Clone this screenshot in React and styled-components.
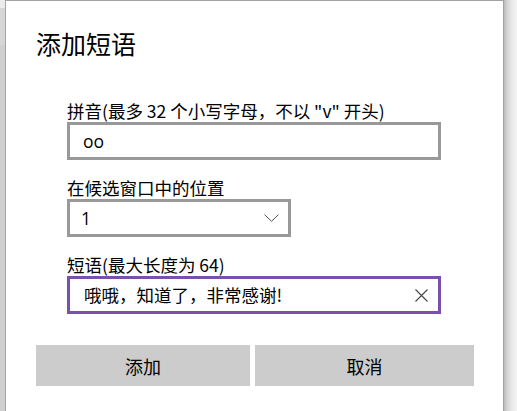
import React, { useState } from "react"
import styled, { createGlobalStyle } from "styled-components"

const GlobalStyle = createGlobalStyle`
  html, body {
    margin: 0;
    padding: 0;
    background: #f2f2f2;
    overflow: hidden;
  }
  body {
    font-family: "Noto Sans CJK SC", "Noto Sans", sans-serif;
    color: #000;
  }
`

const Page = styled.div`
  display: flex;
  height: 411px;
`

const LeftEdge = styled.div`
  width: 5px;
  background: linear-gradient(to bottom, #ececec 0, #ececec 8px, #d6d6d6 8px, #d6d6d6 45px, #cfcfcf 45px);
`

const RightShadow = styled.div`
  flex: 1;
  background: linear-gradient(to right, #bdbdbd 0, #d9d9d9 4px, #ececec 9px, #f4f4f4 100%);
`

const Dialog = styled.div`
  width: 497px;
  border: 1px solid #a3a3a3;
  border-bottom: none;
  background: #fff;
  display: flex;
  flex-direction: column;
`

const Title = styled.h1`
  margin: 25px 0 0 30px;
  font-size: 25px;
  font-weight: 400;
  line-height: 34px;
`

const Form = styled.div`
  display: flex;
  flex-direction: column;
  gap: 17px;
  margin: 40px 0 0 61px;
`

const Field = styled.div`
  display: flex;
  flex-direction: column;
`

const Label = styled.label`
  font-size: 17.5px;
  line-height: 22px;
  height: 22px;
`

const Box = styled.div`
  box-sizing: border-box;
  width: ${p => p.$width}px;
  height: 38px;
  border: 3px solid ${p => (p.$focused ? "#7950ad" : "#999999")};
  display: flex;
  align-items: center;
  padding: 0 ${p => p.$right}px 0 ${p => p.$left}px;
  background: #fff;
`

const Value = styled.span`
  flex: 1;
  font-family: ${p => (p.$latin ? '"Open Sans", "Noto Sans", sans-serif' : '"Noto Sans CJK SC", sans-serif')};
  font-size: 17.5px;
  line-height: 22px;
  white-space: nowrap;
`

const IconButton = styled.span`
  display: flex;
  align-items: center;
  justify-content: center;
  color: #333;
`

const Buttons = styled.div`
  display: grid;
  grid-template-columns: 214px 219px;
  gap: 5px;
  margin: 31px 0 0 30px;
`

const Button = styled.button`
  height: 41px;
  border: none;
  background: #cccccc;
  font-family: "Noto Sans CJK SC", sans-serif;
  font-size: 18px;
  color: #000;
  padding: 0;
`

const Chevron = () => (
  <svg width="15" height="8" viewBox="0 0 15 8" fill="none">
    <path d="M0.5 0.6 L7.5 7.3 L14.5 0.6" stroke="#555" strokeWidth="1" />
  </svg>
)

const Cross = () => (
  <svg width="13" height="13" viewBox="0 0 13 13" fill="none">
    <path d="M0.5 0.5 L12.5 12.5 M12.5 0.5 L0.5 12.5" stroke="#444" strokeWidth="1.1" />
  </svg>
)

export default function App() {
  const [phrase] = useState("哦哦，知道了，非常感谢!")

  return (
    <>
      <GlobalStyle />
      <Page>
        <LeftEdge />
        <Dialog>
          <Title>添加短语</Title>
          <Form>
            <Field>
              <Label>拼音(最多 32 个小写字母，不以 "v" 开头)</Label>
              <Box $width={374} $left={13} $right={11}>
                <Value $latin>oo</Value>
              </Box>
            </Field>
            <Field>
              <Label>在候选窗口中的位置</Label>
              <Box $width={224} $left={11} $right={9}>
                <Value $latin>1</Value>
                <IconButton>
                  <Chevron />
                </IconButton>
              </Box>
            </Field>
            <Field>
              <Label>短语(最大长度为 64)</Label>
              <Box $width={374} $left={14} $right={10} $focused>
                <Value>{phrase}</Value>
                <IconButton>
                  <Cross />
                </IconButton>
              </Box>
            </Field>
          </Form>
          <Buttons>
            <Button>添加</Button>
            <Button>取消</Button>
          </Buttons>
        </Dialog>
        <RightShadow />
      </Page>
    </>
  )
}
